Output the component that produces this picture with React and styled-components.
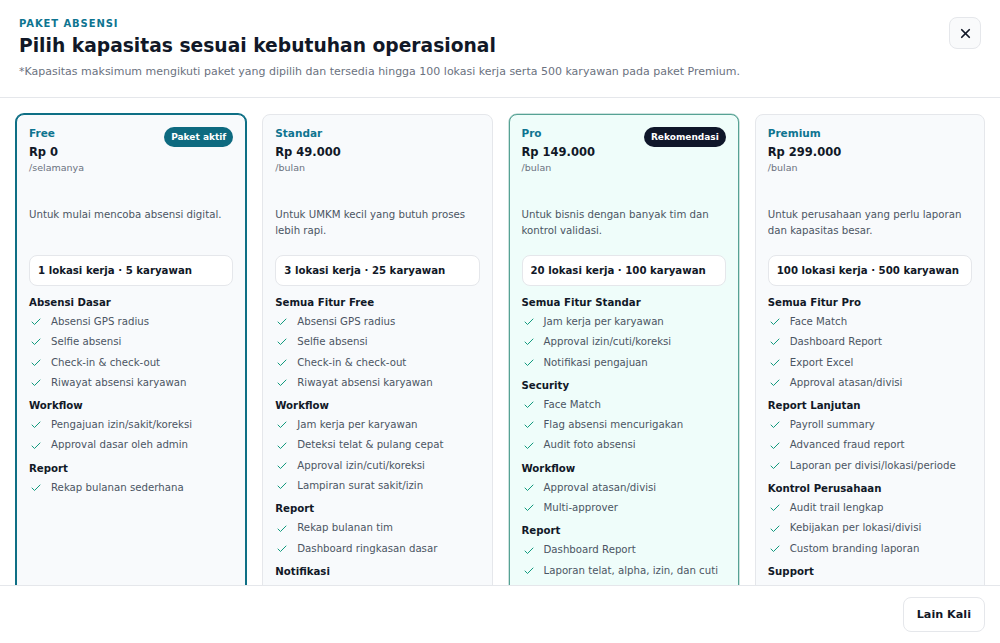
import React from 'react'
import styled, { createGlobalStyle } from 'styled-components'
import { Check, X } from 'lucide-react'

const GlobalStyle = createGlobalStyle`
  html, body { margin: 0; padding: 0; background: #ffffff; }
  body { font-family: 'DejaVu Sans', 'Liberation Sans', sans-serif; }
  * { box-sizing: border-box; }
`

const Modal = styled.div`
  width: 1000px;
  height: 643px;
  display: flex;
  flex-direction: column;
  background: #fff;
  overflow: hidden;
`

const Header = styled.div`
  display: flex;
  justify-content: space-between;
  align-items: flex-start;
  padding: 17px 19px 17px 19px;
  border-bottom: 1px solid #e5e7eb;
  flex-shrink: 0;
`

const Eyebrow = styled.div`
  font-size: 10px;
  line-height: 14px;
  font-weight: 700;
  letter-spacing: 0.09em;
  color: #0e7490;
`

const Title = styled.h1`
  margin: 2px 0 0;
  font-size: 18.7px;
  line-height: 26px;
  font-weight: 700;
  color: #111827;
`

const Subtitle = styled.p`
  margin: 5px 0 0;
  font-size: 11px;
  line-height: 16px;
  color: #6b7280;
`

const CloseButton = styled.button`
  width: 32px;
  height: 32px;
  border: 1px solid #e5e7eb;
  border-radius: 8px;
  background: #f9fafb;
  display: flex;
  align-items: center;
  justify-content: center;
  color: #111827;
  padding: 0;
`

const Body = styled.div`
  flex: 1;
  overflow: hidden;
  padding: 16px 15px 0 16px;
`

const Grid = styled.div`
  display: grid;
  grid-template-columns: repeat(4, 1fr);
  gap: 16px;
  align-items: stretch;
`

const Card = styled.div`
  border-radius: 8px;
  padding: 10px 12px 24px;
  background: ${p => (p.$variant === 'pro' ? '#effdfa' : '#f8fafc')};
  border: 1px solid
    ${p => (p.$variant === 'active' ? '#0e6f85' : p.$variant === 'pro' ? '#56a294' : '#e5e7eb')};
  box-shadow: ${p =>
    p.$variant === 'active'
      ? '0 0 0 1px #0e6f85'
      : p.$variant === 'pro'
      ? '0 0 0 0.5px rgba(86, 162, 148, 0.6)'
      : 'none'};
`

const CardTop = styled.div`
  display: flex;
  justify-content: space-between;
  align-items: flex-start;
  min-height: 22px;
`

const PlanName = styled.div`
  font-size: 10.5px;
  line-height: 16px;
  font-weight: 700;
  color: #0e7490;
`

const Badge = styled.span`
  display: inline-flex;
  align-items: center;
  height: 20px;
  padding: 0 7px;
  border-radius: 999px;
  font-size: 9px;
  font-weight: 700;
  color: #fff;
  background: ${p => (p.$dark ? '#0f172a' : '#0e6a80')};
  margin-top: 2px;
`

const Price = styled.div`
  font-size: 11.5px;
  line-height: 18px;
  font-weight: 700;
  color: #111827;
  margin-top: -4px;
`

const Period = styled.div`
  font-size: 9.5px;
  line-height: 14px;
  color: #6b7280;
`

const Desc = styled.p`
  margin: 32px 0 0;
  min-height: 32px;
  font-size: 10.2px;
  line-height: 16px;
  color: #4b5563;
`

const Capacity = styled.div`
  margin-top: 16px;
  background: #fff;
  border: 1px solid #e5e7eb;
  border-radius: 8px;
  padding: 7px 8px;
  font-size: 10.2px;
  line-height: 15px;
  font-weight: 700;
  color: #111827;
`

const Section = styled.div`
  margin-top: ${p => (p.$first ? '9px' : '7px')};
`

const SectionTitle = styled.div`
  font-size: 10.2px;
  line-height: 16px;
  font-weight: 700;
  color: #111827;
`

const List = styled.ul`
  list-style: none;
  margin: 3px 0 0;
  padding: 0;
  display: flex;
  flex-direction: column;
  gap: 4px;
`

const Item = styled.li`
  display: flex;
  align-items: center;
  gap: 9px;
  font-size: 10.2px;
  line-height: 16.3px;
  color: #4b5563;
  padding-left: 1px;

  svg { flex-shrink: 0; color: #129a7e; }
`

const Footer = styled.div`
  flex-shrink: 0;
  height: 58px;
  border-top: 1px solid #e5e7eb;
  display: flex;
  justify-content: flex-end;
  align-items: center;
  padding: 0 15px;
`

const GhostButton = styled.button`
  height: 35px;
  padding: 0 13px;
  border: 1px solid #e5e7eb;
  border-radius: 8px;
  background: #fff;
  font-family: inherit;
  font-size: 11.2px;
  font-weight: 700;
  color: #111827;
`

const plans = [
  {
    name: 'Free',
    price: 'Rp 0',
    period: '/selamanya',
    variant: 'active',
    badge: 'Paket aktif',
    desc: 'Untuk mulai mencoba absensi digital.',
    capacity: '1 lokasi kerja · 5 karyawan',
    sections: [
      { title: 'Absensi Dasar', items: ['Absensi GPS radius', 'Selfie absensi', 'Check-in & check-out', 'Riwayat absensi karyawan'] },
      { title: 'Workflow', items: ['Pengajuan izin/sakit/koreksi', 'Approval dasar oleh admin'] },
      { title: 'Report', items: ['Rekap bulanan sederhana'] },
    ],
  },
  {
    name: 'Standar',
    price: 'Rp 49.000',
    period: '/bulan',
    desc: 'Untuk UMKM kecil yang butuh proses lebih rapi.',
    capacity: '3 lokasi kerja · 25 karyawan',
    sections: [
      { title: 'Semua Fitur Free', items: ['Absensi GPS radius', 'Selfie absensi', 'Check-in & check-out', 'Riwayat absensi karyawan'] },
      { title: 'Workflow', items: ['Jam kerja per karyawan', 'Deteksi telat & pulang cepat', 'Approval izin/cuti/koreksi', 'Lampiran surat sakit/izin'] },
      { title: 'Report', items: ['Rekap bulanan tim', 'Dashboard ringkasan dasar'] },
      { title: 'Notifikasi', items: ['Notifikasi pengajuan', 'Pengingat absensi'] },
    ],
  },
  {
    name: 'Pro',
    price: 'Rp 149.000',
    period: '/bulan',
    variant: 'pro',
    badge: 'Rekomendasi',
    dark: true,
    desc: 'Untuk bisnis dengan banyak tim dan kontrol validasi.',
    capacity: '20 lokasi kerja · 100 karyawan',
    sections: [
      { title: 'Semua Fitur Standar', items: ['Jam kerja per karyawan', 'Approval izin/cuti/koreksi', 'Notifikasi pengajuan'] },
      { title: 'Security', items: ['Face Match', 'Flag absensi mencurigakan', 'Audit foto absensi'] },
      { title: 'Workflow', items: ['Approval atasan/divisi', 'Multi-approver'] },
      { title: 'Report', items: ['Dashboard Report', 'Laporan telat, alpha, izin, dan cuti', 'Export Excel'] },
    ],
  },
  {
    name: 'Premium',
    price: 'Rp 299.000',
    period: '/bulan',
    desc: 'Untuk perusahaan yang perlu laporan dan kapasitas besar.',
    capacity: '100 lokasi kerja · 500 karyawan',
    sections: [
      { title: 'Semua Fitur Pro', items: ['Face Match', 'Dashboard Report', 'Export Excel', 'Approval atasan/divisi'] },
      { title: 'Report Lanjutan', items: ['Payroll summary', 'Advanced fraud report', 'Laporan per divisi/lokasi/periode'] },
      { title: 'Kontrol Perusahaan', items: ['Audit trail lengkap', 'Kebijakan per lokasi/divisi', 'Custom branding laporan'] },
      { title: 'Support', items: ['Prioritas support'] },
    ],
  },
]

const PlanCard = ({ plan }) => (
  <Card $variant={plan.variant}>
    <CardTop>
      <PlanName>{plan.name}</PlanName>
      {plan.badge && <Badge $dark={plan.dark}>{plan.badge}</Badge>}
    </CardTop>
    <Price>{plan.price}</Price>
    <Period>{plan.period}</Period>
    <Desc>{plan.desc}</Desc>
    <Capacity>{plan.capacity}</Capacity>
    {plan.sections.map((s, i) => (
      <Section key={s.title} $first={i === 0}>
        <SectionTitle>{s.title}</SectionTitle>
        <List>
          {s.items.map(it => (
            <Item key={it}>
              <Check size={12} strokeWidth={2} />
              {it}
            </Item>
          ))}
        </List>
      </Section>
    ))}
  </Card>
)

export default function App() {
  return (
    <>
      <GlobalStyle />
      <Modal>
        <Header>
          <div>
            <Eyebrow>PAKET ABSENSI</Eyebrow>
            <Title>Pilih kapasitas sesuai kebutuhan operasional</Title>
            <Subtitle>
              *Kapasitas maksimum mengikuti paket yang dipilih dan tersedia hingga 100 lokasi kerja serta 500 karyawan pada paket Premium.
            </Subtitle>
          </div>
          <CloseButton aria-label="Tutup">
            <X size={15} strokeWidth={2.75} />
          </CloseButton>
        </Header>
        <Body>
          <Grid>
            {plans.map(p => (
              <PlanCard key={p.name} plan={p} />
            ))}
          </Grid>
        </Body>
        <Footer>
          <GhostButton>Lain Kali</GhostButton>
        </Footer>
      </Modal>
    </>
  )
}
